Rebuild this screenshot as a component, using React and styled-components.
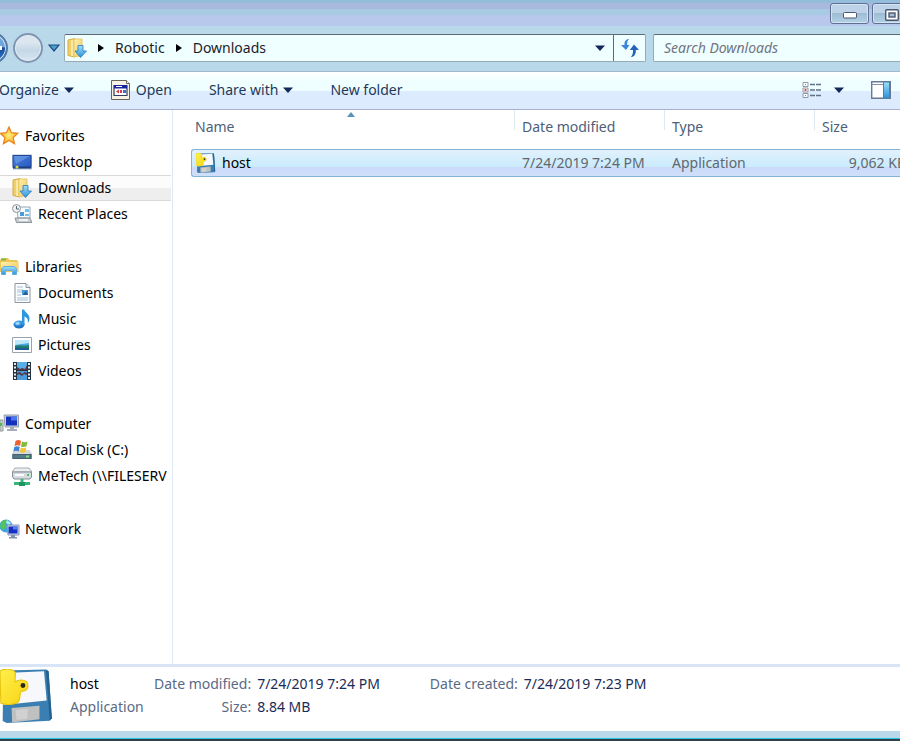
import React, { useState } from "react";
import styled, { createGlobalStyle, css } from "styled-components";

// ******************
// data
// ******************
const places = [
	{
		name: "Favorites",
		icon: "star",
		items: [
			{ name: "Desktop", icon: "desktop" },
			{ name: "Downloads", icon: "downloads" },
			{ name: "Recent Places", icon: "recent" },
		],
	},
	{
		name: "Libraries",
		icon: "libraries",
		items: [
			{ name: "Documents", icon: "document" },
			{ name: "Music", icon: "music" },
			{ name: "Pictures", icon: "picture" },
			{ name: "Videos", icon: "video" },
		],
	},
	{
		name: "Computer",
		icon: "computer",
		items: [
			{ name: "Local Disk (C:)", icon: "disk" },
			{ name: "MeTech (\\\\FILESERV", icon: "netDrive" },
		],
	},
	{ name: "Network", icon: "network", items: [] },
];

const files = [
	{
		name: "host",
		modified: "7/24/2019 7:24 PM",
		type: "Application",
		size: "9,062 KB",
	},
];

// ******************
// icons
// ******************
const drawings = {
	star: (
		<path
			d="M9 1l2.5 5.7 6.3.6-4.7 4.2 1.4 6.2L9 14.5l-5.6 3.2 1.5-6.2L.2 7.3l6.3-.6z"
			fill="url(#gold)"
			stroke="#e8851c"
			strokeWidth="1.2"
		/>
	),
	desktop: (
		<>
			<path d="M0 2.5h20v15H1z" fill="#a9bbcd" />
			<path d="M1 3.5h18v12H1z" fill="url(#screen)" stroke="#24479c" />
			<path d="M2 4h16L4 12z" fill="#7fb1f0" opacity=".45" />
			<path d="M1 14.5h18v2H1z" fill="#1c3d79" />
			<circle cx="5" cy="15" r="1.6" fill="#d8d94a" />
		</>
	),
	downloads: (
		<>
			<path d="M1 2l7-1.5V19l-7-1.5z" fill="#f0cf68" stroke="#d6ac45" />
			<path d="M7 1h8v16.500L7 19z" fill="url(#folder)" stroke="#e6c96f" />
			<path d="M5 2v16" stroke="#fff1b8" strokeWidth="1.5" />
			<path
				d="M11 7.500h5V13h3.500L13.500 19.500 8 13h3z"
				fill="url(#sky)"
				stroke="#2579c4"
				strokeWidth=".8"
			/>
		</>
	),
	recent: (
		<>
			<path d="M5 3h13v11H6z" fill="#f7fafc" stroke="#9aa6ad" />
			<path d="M3 14h15l2 4.500H4.500z" fill="#c5cbd0" stroke="#8e979e" />
			<circle cx="4.500" cy="4.500" r="4" fill="#eef1f3" stroke="#8c979e" />
			<path d="M4.500 2v3H7" fill="none" stroke="#56656f" />
			<path d="M8 8h4v4H8z" fill="#4b9bd8" />
			<path d="M13 5h4v3h-4zM13 10h4v2h-4z" fill="#76c0e6" />
			<path d="M7 16h9" stroke="#fff" strokeWidth="1.5" />
		</>
	),
	libraries: (
		<>
			<path d="M0 3l2-2h6l1.500 2H17l1.500 2v10H0z" fill="#edc65a" />
			<path d="M1 5h17v9H1z" fill="url(#folder)" />
			<path d="M1 2.500h5" stroke="#79bc4a" strokeWidth="2" />
			<path
				d="M1.500 17.500v-5.500l2-2.500h11l2 2.500v5.500h-4V13.500h-7v4z"
				fill="url(#sky)"
				stroke="#65ace0"
			/>
		</>
	),
	document: (
		<>
			<path d="M3 .5h11l4 4v15H3z" fill="#fbfdff" stroke="#8b969f" />
			<path d="M14 .5v4h4" fill="#e3eaf0" stroke="#8b969f" />
			<path
				d="M5 4h6M5 7h6M5 9h5M5 12h4M5 15h11M5 17h11"
				stroke="#a5bdd6"
			/>
			<path d="M10 7h6v5h-6z" fill="#4a9adb" />
			<path d="M12 10l2-2 2 4h-5z" fill="#235f9d" />
		</>
	),
	music: (
		<>
			<ellipse cx="7" cy="15.500" rx="5.500" ry="4" fill="url(#note)" />
			<path
				d="M10 16V.5h2.200c.3 3 5.300 4 5.300 9 0 2-.8 3.500-1.800 4.500.8-4-.7-5.500-3.200-6.500V16z"
				fill="#2f97e0"
			/>
			<ellipse cx="5.500" cy="14.500" rx="2" ry="1.200" fill="#a6dcfa" />
		</>
	),
	picture: (
		<>
			<path d="M.5 2.500h19v15H.5z" fill="#fff" stroke="#9ba2a8" />
			<path d="M3 5h14v10H3z" fill="#4aa7e5" />
			<path d="M3 5h14v3L3 10z" fill="#bfe7fa" />
			<path d="M3 11c5-2 9 1 14-1v5H3z" fill="#207d67" />
			<path d="M3 13c5-1 9 1 14 0v2H3z" fill="#195b9b" />
		</>
	),
	video: (
		<>
			<path d="M1 1h18v18H1z" fill="#25333e" />
			<path d="M5 1h10v8H5z" fill="#58aee5" />
			<path d="M5 10h10v9H5z" fill="#4a9bdb" />
			<path d="M5 9V6l3 2 2-1 3 1 2-4v5zM5 12l3-1 2 2 3-2 2 1v2l-3-1-2 2-3-2-2 1z" fill="#5b3542" />
			<path
				d="M3 2v17M17 2v17"
				stroke="#e3edf3"
				strokeWidth="2"
				strokeDasharray="2 1.500"
			/>
		</>
	),
	computer: (
		<>
			<path d="M0 6h3v11H0z" fill="#c9d2cf" stroke="#8d9c95" />
			<path d="M1 9v3" stroke="#4fbb50" strokeWidth="2" />
			<path d="M4 1h14.500v12H5z" fill="#c8d0dc" stroke="#959dac" />
			<path d="M6 2.500h11v9H6z" fill="#1731bf" />
			<path d="M11 2.500h6v4h-6z" fill="#4c75ec" />
			<path d="M10 13h4v2h3v2H7v-2h3z" fill="#a5adb6" />
		</>
	),
	disk: (
		<>
			<path d="M3 10h14l3 4v5H0v-5z" fill="#9aa6ad" />
			<path d="M3 10h14l3 4H0z" fill="#d4dade" />
			<path d="M1 14.500h18v4H1z" fill="#53788a" stroke="#44606c" />
			<path d="M14 16.500h3" stroke="#76e080" strokeWidth="2" />
			<path d="M3.500 1c2-1.200 3.500-1.200 5.500 0L8 6C6 5 5 5 2.500 6z" fill="#ec6332" />
			<path d="M10 1.500c2 1 3.500 1 5.500 0l-1 4.800c-2 1-3.500 1-5.500.2z" fill="#7fbd3c" />
			<path d="M2.300 7c2-1 3.500-1 5.500 0l-1 4.500c-2-1-3.500-1-5.500 0z" fill="#3a86d8" />
			<path d="M8.800 7.500c2 1 3.500 1 5.500 0l-1 4.500c-2 1-3.500 1-5.500 0z" fill="#f6c331" />
		</>
	),
	netDrive: (
		<>
			<path d="M3 2h14l3 4H0z" fill="#eceff1" stroke="#a3abb0" />
			<path d="M.5 6h19v5L18 13H2L.5 11z" fill="#d5dbdf" stroke="#858e94" />
			<path d="M3 9h9" stroke="#fff" strokeWidth="2" />
			<path d="M15 9h2" stroke="#49c65f" strokeWidth="2" />
			<path d="M8.500 13h3v3H18v3H2v-3h6.500z" fill="#35b778" />
			<path d="M7 16h6v4H7z" fill="#229363" />
		</>
	),
	network: (
		<>
			<circle cx="6" cy="7" r="6.500" fill="#3ba5dc" />
			<path d="M1 3c3-3 5-2 7-1L5 5l2 3-4 3-3-3z" fill="#53c262" />
			<path d="M7 1l4 3-2 2-3-2z" fill="#b4e9f4" />
			<path d="M7 6h12v10H8z" fill="#cbd5e7" stroke="#8595bd" />
			<path d="M8.500 7.500h9v7h-9z" fill="#142fc1" />
			<path d="M13 7.500h4.500v3H13z" fill="#587df0" />
			<path d="M11 16h4v2h2v1.500H9V18h2z" fill="#8192ae" />
		</>
	),
	// floppy disk with a yellow snake over its label
	host: (
		<>
			<path d="M1.200.6L17 .2l1 .6 1.200 17.400-.8 1L2.500 20l-1.500-.7z" fill="#3b7fb2" />
			<path d="M17 .2l1 .6 1.200 17.400-.8 1z" fill="#24628f" />
			<path d="M4 1.400L16.300.8l1 10.900L1.200 13.300z" fill="#f6f8fb" />
			<path d="M4.300 14.400l10.300-.8v5L4.500 19.800z" fill="#bfc1c1" />
			<path d="M5.800 15.200l4.500-.4-.2 3.600-4 .5z" fill="#d0d1d0" />
			<path
				d="M0 .8C1-.2 4.800-.2 5.600 1.200c.4 1.200-.2 2.500 0 3.500 1.500-.9 3.500-.8 4.400.2.500 1 .5 2.400-.4 3-.7.4-1.500.3-1.900.5-.6 1.600 0 3.200-1.200 4-1.500.9-4.800 1-6.200.2z"
				fill="url(#snake)"
				stroke="#e8c20b"
				strokeWidth=".4"
			/>
			<circle cx="8.500" cy="6.100" r=".9" fill="#2b2719" />
		</>
	),
	program: (
		<>
			<path d="M.5.5h15l3 3v16H.5z" fill="#f6f2e4" stroke="#68645b" />
			<path d="M15.500.5v3h3" fill="#fff" stroke="#68645b" />
			<path d="M3 5.500h13v10H3z" fill="#fff" stroke="#333c64" strokeWidth="1.200" />
			<path d="M3 5h13v3.500H3z" fill="#17259e" />
			<path d="M5 6.500h6" stroke="#fff" />
			<path d="M5 11.500l3-2v4z" fill="#d03c35" />
			<path d="M9 10h2v3H9z" fill="#cc3d56" />
			<path d="M12 10h3v3h-3z" fill="#3d6cd5" />
		</>
	),
	refresh: (
		<>
			<path d="M8 1C5 2 4.200 4 4.500 7H1l5 5 3.500-5H7.200C7 4 7.500 2.500 9 1z" fill="#3a86dd" />
			<path d="M12 19c3-1 4-4 3.800-7H19l-5-5.500L9.800 12H13c.2 3-.5 5-2 7z" fill="#2361bd" />
		</>
	),
	views: (
		<>
			<path d="M1 2.500h5v4H1zM1 8h5v4H1zM1 13.500h5v4H1z" fill="#fff" stroke="#8e98aa" />
			<path d="M3 4.500h1M3 15.500h1" stroke="#6f86a5" />
			<path d="M2.500 10h2" stroke="#d4504b" strokeWidth="2" />
			<path
				d="M8 4.500h12M8 10h12M8 15.500h12"
				stroke="#5f7286"
				strokeWidth="1.500"
				strokeDasharray="5 1"
			/>
		</>
	),
	pane: (
		<>
			<path d="M.7 1.700h18.600v16.600H.7z" fill="#fff" stroke="#687998" strokeWidth="1.400" />
			<path d="M1 4.500h11" stroke="#8390a7" />
			<path d="M12.500 2h6v16h-6z" fill="url(#sky)" stroke="#4b83a7" />
		</>
	),
};

const Icon = ({ name, size = 20 }) => (
	<Svg width={size} height={size} viewBox="0 0 20 20" aria-hidden="true">
		{drawings[name]}
	</Svg>
);

const Caret = () => (
	<Svg width="10" height="6" viewBox="0 0 10 6" aria-hidden="true">
		<path d="M0 .5h10L5 6z" fill="#14295a" />
	</Svg>
);

const Chevron = () => (
	<Svg width="6" height="8" viewBox="0 0 6 8" aria-hidden="true">
		<path d="M0 0l6 4-6 4z" fill="#000" />
	</Svg>
);

// gradients shared by the icons above
const Gradients = () => (
	<DefsSvg width="0" height="0" aria-hidden="true">
		<defs>
			<radialGradient id="gold">
				<stop offset="0" stopColor="#fff27a" />
				<stop offset="1" stopColor="#fbab2e" />
			</radialGradient>
			<linearGradient id="screen" x2="1" y2="1">
				<stop offset="0" stopColor="#5181d6" />
				<stop offset="1" stopColor="#2459c4" />
			</linearGradient>
			<linearGradient id="folder" x2="1" y2="1">
				<stop offset="0" stopColor="#fff0ad" />
				<stop offset="1" stopColor="#ecc75e" />
			</linearGradient>
			<linearGradient id="sky" x2="0" y2="1">
				<stop offset="0" stopColor="#9edff8" />
				<stop offset="1" stopColor="#2b93dc" />
			</linearGradient>
			<radialGradient id="note" cx=".4" cy=".3">
				<stop offset="0" stopColor="#6cc4f6" />
				<stop offset="1" stopColor="#1a72c9" />
			</radialGradient>
			<linearGradient id="snake" x2="1" y2="1">
				<stop offset="0" stopColor="#fff04c" />
				<stop offset="1" stopColor="#f7d312" />
			</linearGradient>
		</defs>
	</DefsSvg>
);

// ******************
// components
// ******************
const TitleBar = () => (
	<TitleRow>
		<WindowButton aria-label="Minimize">
			<Svg width="14" height="7" viewBox="0 0 14 7">
				<rect x=".5" y=".5" width="13" height="5.500" rx="1" fill="#fff" stroke="#4d5772" />
			</Svg>
		</WindowButton>
		<WindowButton aria-label="Maximize">
			<Svg width="14" height="12" viewBox="0 0 14 12">
				<rect x=".7" y=".7" width="12.600" height="10.600" rx="1" fill="#fff" stroke="#4d5772" strokeWidth="1.400" />
				<rect x="4" y="4" width="6" height="4" fill="#a8bdd4" stroke="#4d5772" strokeWidth="1.400" />
			</Svg>
		</WindowButton>
	</TitleRow>
);

const NavigationBar = () => {
	const [search, setSearch] = useState("");

	return (
		<NavRow>
			<History>
				<RoundButton $primary aria-label="Back">
					<Svg width="22" height="12" viewBox="0 0 22 12">
						<path d="M7 0v4h14v4H7v4L0 6z" fill="#fff" />
					</Svg>
				</RoundButton>
				<RoundButton aria-label="Forward" />
				<PlainButton aria-label="Recent pages">
					<Svg width="12" height="8" viewBox="0 0 12 8">
						<path d="M1 1h10L6 7z" fill="#4fa0d1" stroke="#1c4d80" strokeWidth="1.200" />
					</Svg>
				</PlainButton>
			</History>
			<AddressBar aria-label="Address">
				<Crumbs>
					<Icon name="downloads" />
					<Chevron />
					<Crumb href="#robotic">Robotic</Crumb>
					<Chevron />
					<Crumb href="#downloads">Downloads</Crumb>
				</Crumbs>
				<AddressButton aria-label="Previous locations">
					<Caret />
				</AddressButton>
				<AddressButton $divided aria-label="Refresh">
					<Icon name="refresh" />
				</AddressButton>
			</AddressBar>
			<SearchBox
				type="text"
				aria-label="Search Downloads"
				placeholder="Search Downloads"
				value={search}
				onChange={(e) => setSearch(e.target.value)}
			/>
		</NavRow>
	);
};

const Toolbar = () => (
	<ToolRow>
		<ToolButton>
			Organize <Caret />
		</ToolButton>
		<ToolButton>
			<Icon name="program" /> Open
		</ToolButton>
		<ToolButton>
			Share with <Caret />
		</ToolButton>
		<ToolButton>New folder</ToolButton>
		<ViewTools>
			<ToolButton aria-label="Change your view">
				<Icon name="views" />
			</ToolButton>
			<ToolButton aria-label="More view options">
				<Caret />
			</ToolButton>
			<PaneButton aria-label="Show the preview pane">
				<Icon name="pane" />
			</PaneButton>
		</ViewTools>
	</ToolRow>
);

const Sidebar = ({ current, onSelect }) => (
	<Side>
		{places.map((group) => (
			<PlaceGroup key={group.name}>
				<Place href="#" onClick={() => onSelect(group.name)}>
					<Icon name={group.icon} />
					{group.name}
				</Place>
				{group.items.map((item) => (
					<Place
						key={item.name}
						href="#"
						$nested
						$selected={item.name === current}
						onClick={() => onSelect(item.name)}
					>
						<Icon name={item.icon} />
						{item.name}
					</Place>
				))}
			</PlaceGroup>
		))}
	</Side>
);

const FileList = () => (
	<FilePane>
		<FileTable>
			<colgroup>
				<col />
				<DateCol />
				<DateCol />
				<SizeCol />
			</colgroup>
			<thead>
				<tr>
					<HeadCell>
						Name
						<SortMark width="8" height="5" viewBox="0 0 8 5" aria-hidden="true">
							<path d="M0 5l4-5 4 5z" fill="#5b93b8" />
						</SortMark>
					</HeadCell>
					<HeadCell>Date modified</HeadCell>
					<HeadCell>Type</HeadCell>
					<HeadCell>Size</HeadCell>
				</tr>
			</thead>
			<tbody>
				{files.map((file) => (
					<tr key={file.name}>
						<Cell>
							<FileName>
								<Icon name="host" />
								{file.name}
							</FileName>
						</Cell>
						<Cell>{file.modified}</Cell>
						<Cell>{file.type}</Cell>
						<Cell $right>{file.size}</Cell>
					</tr>
				))}
			</tbody>
		</FileTable>
	</FilePane>
);

const DetailsPane = () => (
	<Details>
		<Icon name="host" size={54} />
		<FileTitle>
			<strong>host</strong>
			<span>Application</span>
		</FileTitle>
		<Facts>
			<dt>Date modified:</dt>
			<dd>7/24/2019 7:24 PM</dd>
			<dt>Size:</dt>
			<dd>8.84 MB</dd>
		</Facts>
		<Facts>
			<dt>Date created:</dt>
			<dd>7/24/2019 7:23 PM</dd>
		</Facts>
	</Details>
);

const App = () => {
	const [current, setCurrent] = useState("Downloads");

	return (
		<Window>
			<GlobalStyle />
			<Gradients />
			<TitleBar />
			<NavigationBar />
			<Toolbar />
			<Main>
				<Sidebar current={current} onSelect={setCurrent} />
				<FileList />
			</Main>
			<DetailsPane />
			<BottomFrame />
		</Window>
	);
};

export default App;

// ******************
// styles
// ******************
const GlobalStyle = createGlobalStyle`
	* {
		box-sizing: border-box;
	}
	body {
		margin: 0;
		overflow: hidden;
		font: 14px/20px "Noto Sans", "Open Sans", sans-serif;
		color: #000;
	}
	button, input {
		font: inherit;
	}
`;
const Svg = styled.svg`
	display: block;
	flex: none;
`;
const DefsSvg = styled.svg`
	position: absolute;
`;
const Window = styled.div`
	display: flex;
	flex-direction: column;
	min-height: 100vh;
	overflow: hidden;
	background: #fff;
`;
const PlainButton = styled.button`
	display: flex;
	align-items: center;
	padding: 0;
	border: 0;
	background: none;
`;

// title bar
const TitleRow = styled.header`
	display: flex;
	justify-content: flex-end;
	gap: 3px;
	height: 26px;
	padding-top: 3px;
	margin-right: -11px;
	background: linear-gradient(
		#94bddb 0 3px,
		#a9b9de 3px 9px,
		#a6cbe3 9px 15px,
		#b8c8ec 15px
	);
`;
const WindowButton = styled(PlainButton)`
	justify-content: center;
	width: 39px;
	height: 21px;
	padding-top: 3px;
	border: 1px solid #626f94;
	border-radius: 3px;
	box-shadow: inset 0 0 0 1px #d3e4f2;
	background: linear-gradient(#bfd3e8 50%, #9dbbd3 50%, #b4d2e6);
`;

// navigation bar
const NavRow = styled.div`
	display: flex;
	align-items: center;
	gap: 4px;
	height: 45px;
	padding-bottom: 2px;
	background: #b9d9ea;
`;
const History = styled.div`
	display: flex;
	align-items: center;
	gap: 5px;
	flex: none;
	margin-left: -24px;
`;
const RoundButton = styled(PlainButton)`
	justify-content: center;
	width: ${(props) => (props.$primary ? 32 : 30)}px;
	height: ${(props) => (props.$primary ? 32 : 30)}px;
	flex: none;
	border: 2px solid ${(props) => (props.$primary ? "#5578a8" : "#8296b3")};
	border-radius: 50%;
	box-shadow: inset 0 0 0 1px #e3eef6;
	background: ${(props) =>
		props.$primary
			? "linear-gradient(#6da5dd 45%, #17479c 50%, #2b83cf)"
			: "linear-gradient(#dbe6ef 30%, #c4d7e6 60%, #d8e8f2)"};
`;
const field = css`
	height: 28px;
	border: 1px solid #97a9b5;
	border-top-color: #5d6b75;
	border-radius: 2px;
	background: #effeff;
`;
const AddressBar = styled.nav`
	${field}
	display: flex;
	flex: 1;
	min-width: 0;
`;
const Crumbs = styled.div`
	display: flex;
	align-items: center;
	flex: 1;
	gap: 11px;
	padding-left: 2px;
	min-width: 0;
`;
const Crumb = styled.a`
	color: #1c1c28;
	text-decoration: none;
`;
const AddressButton = styled(PlainButton)`
	justify-content: center;
	width: ${(props) => (props.$divided ? 32 : 26)}px;
	border-left: ${(props) => (props.$divided ? "1px solid #5d6b75" : 0)};
`;
const SearchBox = styled.input`
	${field}
	width: 260px;
	margin-left: 3px;
	margin-right: -13px;
	padding: 0 10px;
	outline: 0;

	&::placeholder {
		color: #71757f;
		font-style: italic;
		opacity: 1;
	}
`;

// toolbar
const ToolRow = styled.div`
	display: flex;
	align-items: center;
	gap: 37px;
	height: 39px;
	padding: 0 9px 2px 0;
	border-top: 1px solid #a3b7d0;
	border-bottom: 1px solid #a9b1d2;
	background: linear-gradient(#fff 0, #effeff 10px 19px, #dcebfd 19px);
`;
const ToolButton = styled(PlainButton)`
	gap: 5px;
	color: #1e395b;
	white-space: nowrap;

	&:first-child {
		margin-left: -1px;
	}
`;
const ViewTools = styled.div`
	display: flex;
	align-items: center;
	gap: 12px;
	margin-left: auto;
`;
const PaneButton = styled(ToolButton)`
	margin-left: 15px;
`;

// sidebar
const Main = styled.main`
	display: flex;
	flex: 1;
`;
const Side = styled.nav`
	display: flex;
	flex-direction: column;
	gap: 27px;
	width: 173px;
	flex: none;
	padding: 13px 1px 13px 0;
	border-right: 1px solid #dde9f7;
`;
const PlaceGroup = styled.div`
	display: flex;
	flex-direction: column;
`;
const Place = styled.a`
	display: flex;
	align-items: center;
	gap: ${(props) => (props.$nested ? 6 : 5)}px;
	height: 26px;
	padding-left: ${(props) => (props.$nested ? 12 : 0)}px;
	color: #000;
	text-decoration: none;
	white-space: nowrap;
	${(props) =>
		props.$selected &&
		css`
			border-top: 1px solid #d9d9d9;
			border-bottom: 1px solid #d9d9d9;
			background: linear-gradient(#fcfcfc 50%, #eee 50%);
		`}
`;

// file list
const FilePane = styled.section`
	flex: 1;
	min-width: 0;
	padding-left: 18px;
	overflow: hidden;
`;
const FileTable = styled.table`
	width: calc(100% + 14px);
	table-layout: fixed;
	border-collapse: separate;
	border-spacing: 0;
`;
const DateCol = styled.col`
	width: 150px;
`;
const SizeCol = styled.col`
	width: 100px;
`;
const HeadCell = styled.th`
	position: relative;
	padding: 7px 8px 12px;
	background: linear-gradient(#dfe9f2, #dfe9f2) left top / 1px 20px no-repeat;
	color: #4c607a;
	font-weight: 400;
	text-align: left;

	&:first-child {
		padding-left: 4px;
		background: none;
	}
`;
const SortMark = styled(Svg)`
	position: absolute;
	top: 2px;
	left: calc(50% - 6px);
`;
const Cell = styled.td`
	height: 28px;
	padding: 0 8px;
	border: solid #84b2d4;
	border-width: 1px 0;
	background: linear-gradient(#e2f1fc, #c9ebfc 66%, #ccdafa 66%, #cfdffb);
	color: #62676f;
	text-align: ${(props) => (props.$right ? "right" : "left")};
	white-space: nowrap;

	&:first-child {
		padding-left: 4px;
		border-left-width: 1px;
		border-radius: 3px 0 0 3px;
		color: #000;
	}
`;
const FileName = styled.div`
	display: flex;
	align-items: center;
	gap: 6px;
`;

// details pane
const Details = styled.footer`
	display: flex;
	height: 67px;
	padding-top: 2px;
	border-top: 3px solid #d9e5f7;
`;
const FileTitle = styled.div`
	display: flex;
	flex-direction: column;
	width: 84px;
	margin-left: 16px;
	padding-top: 3px;
	line-height: 23px;
	color: #5a6a85;

	strong {
		color: #000;
		font-weight: 400;
	}
`;
const Facts = styled.dl`
	display: grid;
	grid-template-columns: auto auto;
	grid-auto-rows: 23px;
	column-gap: 6px;
	margin: 0 50px 0 0;
	padding-top: 3px;
	line-height: 23px;

	dt {
		color: #5a6a85;
		text-align: right;
	}
	dd {
		margin: 0;
		color: #1b2b57;
	}
`;
const BottomFrame = styled.div`
	height: 10px;
	border-bottom: 2px solid #31404a;
	background: linear-gradient(#b9d9ea 7px, #27c4de 7px);
`;
